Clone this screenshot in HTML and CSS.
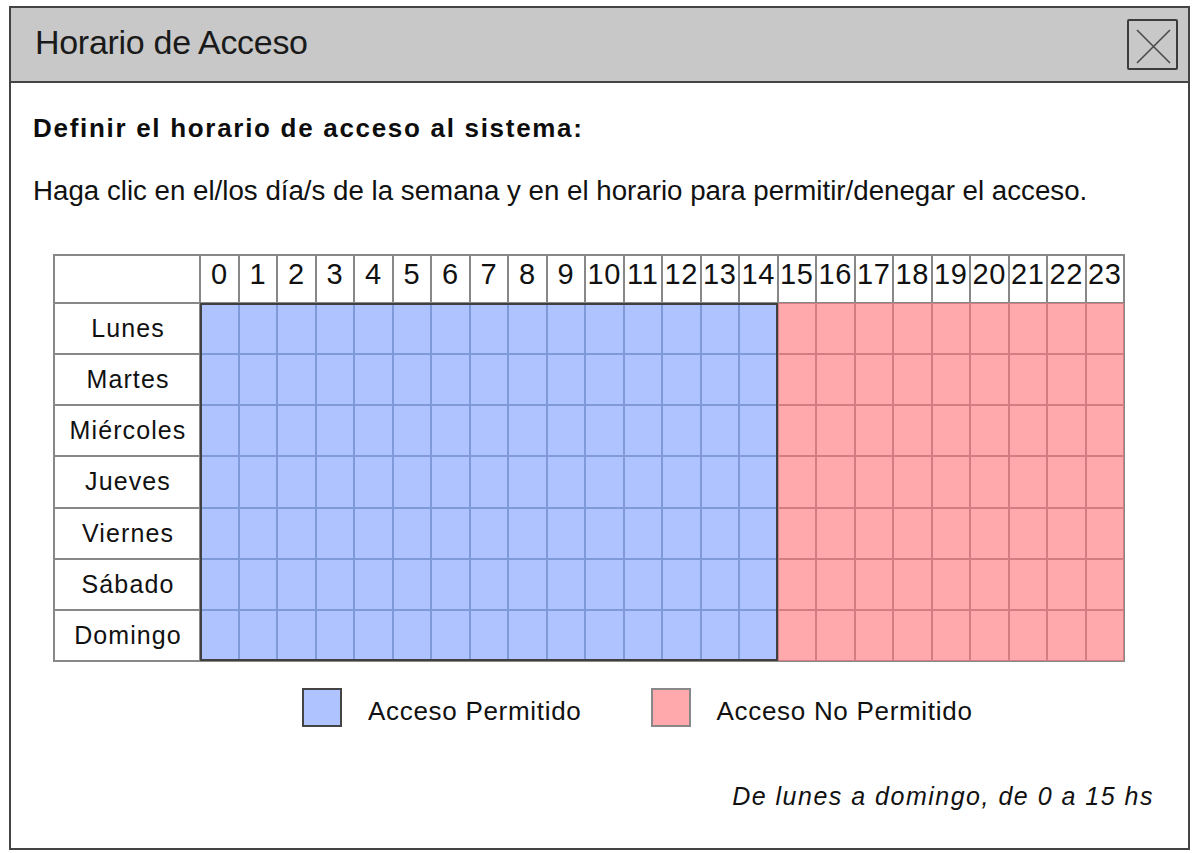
FILE: index.html
```html
<!DOCTYPE html>
<html lang="es">
<head>
<meta charset="utf-8">
<title>Horario de Acceso</title>
<link rel="stylesheet" href="styles.css">
</head>
<body>
<div class="window">
  <div class="titlebar">
    <span class="title">Horario de Acceso</span>
    <button class="close" aria-label="Cerrar">
      <svg width="45" height="47" viewBox="0 0 45 47"><path d="M7 9 L40 42 M40 9 L7 42" stroke="#4a4a4a" stroke-width="1.6" fill="none"/></svg>
    </button>
  </div>
  <div class="content">
    <h1 class="heading">Definir el horario de acceso al sistema:</h1>
    <p class="intro">Haga clic en el/los día/s de la semana y en el horario para permitir/denegar el acceso.</p>
    <div class="schedule">
      <div class="corner"></div>
      <div class="hours">
        <div class="hour">0</div><div class="hour">1</div><div class="hour">2</div><div class="hour">3</div><div class="hour">4</div><div class="hour">5</div><div class="hour">6</div><div class="hour">7</div><div class="hour">8</div><div class="hour">9</div><div class="hour">10</div><div class="hour">11</div><div class="hour">12</div><div class="hour">13</div><div class="hour">14</div><div class="hour">15</div><div class="hour">16</div><div class="hour">17</div><div class="hour">18</div><div class="hour">19</div><div class="hour">20</div><div class="hour">21</div><div class="hour">22</div><div class="hour">23</div>
      </div>
      <div class="days">
        <div class="day">Lunes</div>
        <div class="day">Martes</div>
        <div class="day">Miércoles</div>
        <div class="day">Jueves</div>
        <div class="day">Viernes</div>
        <div class="day">Sábado</div>
        <div class="day">Domingo</div>
      </div>
      <div class="block block-p">
        <div class="c"></div><div class="c"></div><div class="c"></div><div class="c"></div><div class="c"></div><div class="c"></div><div class="c"></div><div class="c"></div><div class="c"></div><div class="c"></div><div class="c"></div><div class="c"></div><div class="c"></div><div class="c"></div><div class="c"></div>
        <div class="c"></div><div class="c"></div><div class="c"></div><div class="c"></div><div class="c"></div><div class="c"></div><div class="c"></div><div class="c"></div><div class="c"></div><div class="c"></div><div class="c"></div><div class="c"></div><div class="c"></div><div class="c"></div><div class="c"></div>
        <div class="c"></div><div class="c"></div><div class="c"></div><div class="c"></div><div class="c"></div><div class="c"></div><div class="c"></div><div class="c"></div><div class="c"></div><div class="c"></div><div class="c"></div><div class="c"></div><div class="c"></div><div class="c"></div><div class="c"></div>
        <div class="c"></div><div class="c"></div><div class="c"></div><div class="c"></div><div class="c"></div><div class="c"></div><div class="c"></div><div class="c"></div><div class="c"></div><div class="c"></div><div class="c"></div><div class="c"></div><div class="c"></div><div class="c"></div><div class="c"></div>
        <div class="c"></div><div class="c"></div><div class="c"></div><div class="c"></div><div class="c"></div><div class="c"></div><div class="c"></div><div class="c"></div><div class="c"></div><div class="c"></div><div class="c"></div><div class="c"></div><div class="c"></div><div class="c"></div><div class="c"></div>
        <div class="c"></div><div class="c"></div><div class="c"></div><div class="c"></div><div class="c"></div><div class="c"></div><div class="c"></div><div class="c"></div><div class="c"></div><div class="c"></div><div class="c"></div><div class="c"></div><div class="c"></div><div class="c"></div><div class="c"></div>
        <div class="c"></div><div class="c"></div><div class="c"></div><div class="c"></div><div class="c"></div><div class="c"></div><div class="c"></div><div class="c"></div><div class="c"></div><div class="c"></div><div class="c"></div><div class="c"></div><div class="c"></div><div class="c"></div><div class="c"></div>
      </div>
      <div class="block block-n">
        <div class="c"></div><div class="c"></div><div class="c"></div><div class="c"></div><div class="c"></div><div class="c"></div><div class="c"></div><div class="c"></div><div class="c"></div>
        <div class="c"></div><div class="c"></div><div class="c"></div><div class="c"></div><div class="c"></div><div class="c"></div><div class="c"></div><div class="c"></div><div class="c"></div>
        <div class="c"></div><div class="c"></div><div class="c"></div><div class="c"></div><div class="c"></div><div class="c"></div><div class="c"></div><div class="c"></div><div class="c"></div>
        <div class="c"></div><div class="c"></div><div class="c"></div><div class="c"></div><div class="c"></div><div class="c"></div><div class="c"></div><div class="c"></div><div class="c"></div>
        <div class="c"></div><div class="c"></div><div class="c"></div><div class="c"></div><div class="c"></div><div class="c"></div><div class="c"></div><div class="c"></div><div class="c"></div>
        <div class="c"></div><div class="c"></div><div class="c"></div><div class="c"></div><div class="c"></div><div class="c"></div><div class="c"></div><div class="c"></div><div class="c"></div>
        <div class="c"></div><div class="c"></div><div class="c"></div><div class="c"></div><div class="c"></div><div class="c"></div><div class="c"></div><div class="c"></div><div class="c"></div>
      </div>
    </div>
    <div class="legend">
      <div class="legend-item"><span class="swatch swatch-p"></span><span class="legend-label">Acceso Permitido</span></div>
      <div class="legend-item"><span class="swatch swatch-n"></span><span class="legend-label">Acceso No Permitido</span></div>
    </div>
    <p class="summary">De lunes a domingo, de 0 a 15 hs</p>
  </div>
</div>
</body>
</html>
```

FILE: styles.css
```css
* { box-sizing: border-box; }

html, body {
  margin: 0;
  padding: 0;
  background: #ffffff;
}

body {
  font-family: "Liberation Sans", Arial, sans-serif;
  color: #111111;
}

.window {
  margin: 6px 0 0 9px;
  width: 1181px;
  height: 844px;
  border: 2px solid #444444;
  background: #ffffff;
  display: flex;
  flex-direction: column;
}

.titlebar {
  height: 75px;
  flex: none;
  background: #c8c8c8;
  border-bottom: 2px solid #444444;
  display: flex;
  align-items: center;
  justify-content: space-between;
  padding: 0 10px 0 24px;
}

.title {
  font-size: 34px;
  letter-spacing: -0.3px;
  color: #1a1a1a;
  padding-bottom: 4px;
}

.close {
  width: 51px;
  height: 51px;
  padding: 0;
  margin: 0;
  border: 2px solid #3c3c3c;
  border-radius: 2px;
  background: #c8c8c8;
  display: flex;
  align-items: center;
  justify-content: center;
}

.close svg { display: block; }

.content {
  flex: 1;
  display: flex;
  flex-direction: column;
  padding: 30px 34px 0 22px;
}

.heading {
  margin: 0;
  font-size: 26px;
  line-height: 30px;
  font-weight: bold;
  letter-spacing: 1.7px;
  color: #0d0d0d;
}

.intro {
  margin: 32px 0 0 0;
  font-size: 27.7px;
  line-height: 32px;
  color: #111111;
}

.schedule {
  margin: 47px 0 0 20px;
  width: 1072px;
  height: 408px;
  border: 1px solid #888888;
  display: grid;
  grid-template-columns: 146px 15fr 9fr;
  grid-template-rows: 48px 1fr;
}

.corner {
  background: #ffffff;
  border: 1px solid #888888;
}

.hours {
  grid-column: 2 / 4;
  display: grid;
  grid-template-columns: repeat(24, 1fr);
}

.hour {
  display: flex;
  align-items: center;
  justify-content: center;
  background: #ffffff;
  border: 1px solid #888888;
  font-size: 29px;
  letter-spacing: 0.6px;
  padding-bottom: 10px;
  color: #111111;
  overflow: hidden;
  white-space: nowrap;
}

.days {
  display: grid;
  grid-template-rows: repeat(7, 1fr);
}

.day {
  display: flex;
  align-items: center;
  justify-content: center;
  background: #ffffff;
  border: 1px solid #888888;
  font-size: 25px;
  letter-spacing: 1.1px;
  padding-left: 2px;
  color: #111111;
}

.block {
  display: grid;
  grid-template-rows: repeat(7, 1fr);
}

.block-p {
  grid-template-columns: repeat(15, 1fr);
  outline: 2px solid #404040;
  outline-offset: -2px;
}

.block-n {
  grid-template-columns: repeat(9, 1fr);
}

.c { border: 1px solid; }

.block-p .c {
  background: #aec3ff;
  border-color: #8099d8;
}

.block-n .c {
  background: #ffa9ad;
  border-color: #d27d82;
}

.legend {
  margin: 26px 0 0 269px;
  display: flex;
  gap: 69px;
  height: 39px;
}

.legend-item {
  display: flex;
  align-items: center;
  gap: 26px;
}

.swatch {
  width: 40px;
  height: 39px;
  border: 2px solid;
}

.swatch-p {
  background: #aec3ff;
  border-color: #444444;
}

.swatch-n {
  background: #ffa9ad;
  border-color: #888888;
}

.legend-label {
  font-size: 26px;
  letter-spacing: 0.7px;
  padding-top: 7px;
  color: #111111;
}

.summary {
  margin: 54px 0 0 0;
  text-align: right;
  font-style: italic;
  font-size: 25px;
  line-height: 30px;
  letter-spacing: 1.5px;
  color: #111111;
}
```
